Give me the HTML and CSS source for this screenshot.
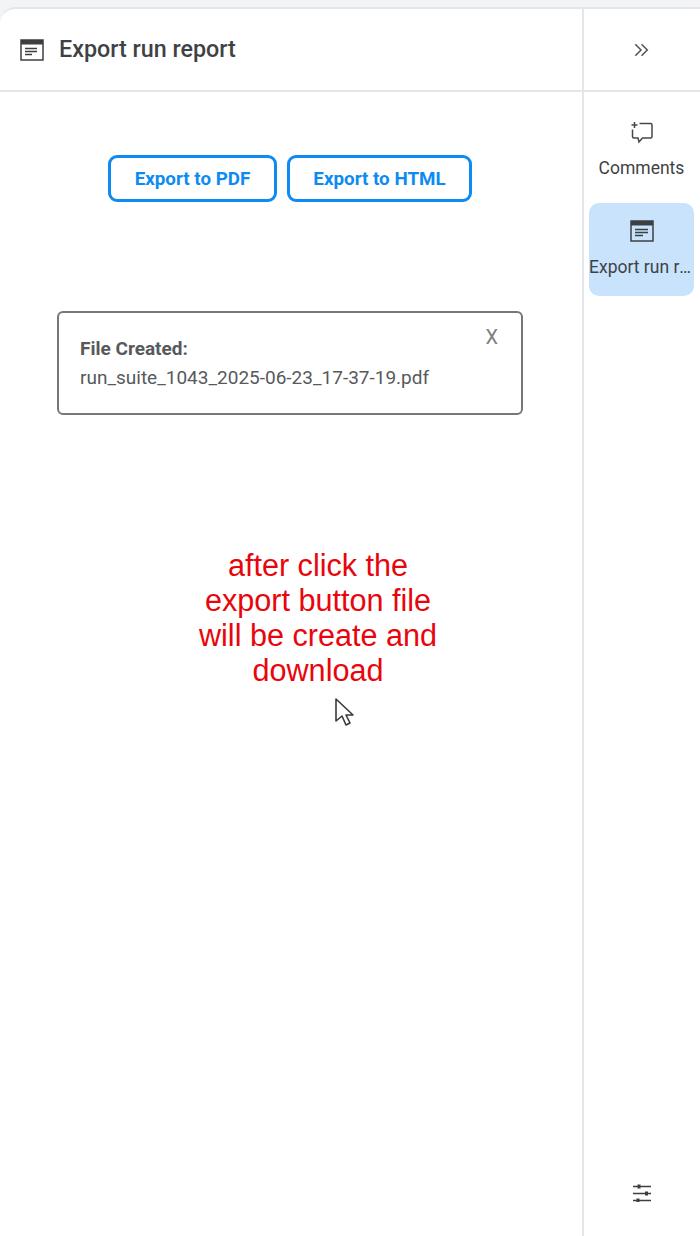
FILE: index.html
```html
<!DOCTYPE html>
<html lang="en">
<head>
    <meta charset="UTF-8">
    <meta name="viewport" content="width=device-width, initial-scale=1.0">
    <title>Export run report</title>
    <link rel="stylesheet" href="styles.css">
</head>
<body>
    <div class="panel">
        <div class="main">
            <div class="main_header">
                <svg class="report_icon" viewBox="0 0 24 24">
                    <rect x="1" y="2" width="22" height="20" fill="none" stroke="#3c3f42" stroke-width="1.5"/>
                    <rect x="1" y="2" width="22" height="4.5" fill="#3c3f42"/>
                    <path d="M5 10.5h12M5 13.500h12M5 16.500h7" stroke="#3c3f42" stroke-width="1.3"/>
                </svg>
                <span class="main_title">Export run report</span>
            </div>
            <div class="main_body">
                <div class="actions">
                    <button class="btn btn_pdf">Export to PDF</button>
                    <button class="btn btn_html">Export to HTML</button>
                </div>
                <div class="notice">
                    <div class="notice_title">File Created:</div>
                    <div class="notice_file">run_suite_1043_2025-06-23_17-37-19.pdf</div>
                    <span class="notice_close">X</span>
                </div>
            </div>
        </div>

        <div class="side">
            <div class="side_header">
                <svg class="collapse_icon" viewBox="0 0 14 14">
                    <path d="M2 2l5 5-5 5M7.500 2l5 5-5 5" fill="none" stroke="#55585b" stroke-width="1.4"/>
                </svg>
            </div>
            <div class="side_items">
                <div class="side_item">
                    <svg class="side_icon" viewBox="0 0 24 24">
                        <path d="M9.500 2.500h11a1.500 1.500 0 0 1 1.500 1.500v11.500a1.500 1.500 0 0 1-1.500 1.500h-8l-3.500 4-1-4h-4a1.500 1.500 0 0 1-1.500-1.500v-7" fill="none" stroke="#45484b" stroke-width="1.500"/>
                        <path d="M4.500 1v6M1.500 4h6" stroke="#45484b" stroke-width="1.500"/>
                    </svg>
                    <span class="side_label">Comments</span>
                </div>
                <div class="side_item active">
                    <svg class="side_icon" viewBox="0 0 24 24">
                        <rect x="1" y="2" width="22" height="20" fill="none" stroke="#3c3f42" stroke-width="1.500"/>
                        <rect x="1" y="2" width="22" height="4.500" fill="#3c3f42"/>
                        <path d="M5 10.500h13M5 13.500h13M5 16.500h8" stroke="#3c3f42" stroke-width="1.300"/>
                    </svg>
                    <span class="side_label">Export run report</span>
                </div>
            </div>
            <div class="side_footer">
                <svg class="settings_icon" viewBox="0 0 18 18">
                    <path d="M0 2.500h18M0 9.500h18M0 16.500h18" stroke="#3c3f42" stroke-width="1.500"/>
                    <path d="M4.500 0.500h3v4h-3zM12 7.500h3v4h-3zM3.500 14.500h3v4h-3z" fill="#3c3f42"/>
                </svg>
            </div>
        </div>
    </div>

    <div class="annotation">after click the export button file will be create and download</div>
    <svg class="cursor" viewBox="0 0 20 30">
        <path d="M2 2v22l6-5 4 9 4-2-4-8h7z" fill="#fff" stroke="#3a3a3a" stroke-width="1.600" stroke-linejoin="round"/>
    </svg>
</body>
</html>
```

FILE: styles.css
```css
*{
    margin: 0;
    padding: 0;
    box-sizing: border-box;
}

html,body{
    height: 100%;
}

body{
    background-color: #f3f4f6;
    font-family: Roboto, "Liberation Sans", sans-serif;
    padding-top: 7px;
    overflow: hidden;
    position: relative;
}

.panel{
    height: 1229px;
    display: flex;
    background-color: #fff;
    border-top: 2px solid #e5e6e8;
    border-top-left-radius: 16px;
}

.main{
    flex: 1;
    min-width: 0;
}

.main_header{
    height: 83px;
    display: flex;
    align-items: center;
    gap: 15px;
    padding-left: 20px;
    border-bottom: 2px solid #e5e6e8;
}

.report_icon{
    width: 24px;
    height: 24px;
}

.main_title{
    font-size: 23.300px;
    font-weight: 500;
    color: #3f4245;
    padding-bottom: 2px;
}

.main_body{
    display: flex;
    flex-direction: column;
    align-items: center;
    padding-right: 2px;
}

.actions{
    display: flex;
    gap: 10px;
    margin-top: 63px;
}

.btn{
    height: 47px;
    background-color: #fff;
    border: 3px solid #0d8bf2;
    border-radius: 9px;
    color: #0d8bf2;
    font-family: inherit;
    font-size: 18.800px;
    font-weight: 700;
}

.btn_pdf{
    width: 169px;
}

.btn_html{
    width: 185px;
}

.notice{
    width: 466px;
    height: 104px;
    margin-top: 109px;
    padding: 23px 21px;
    position: relative;
    border: 2px solid #777;
    border-radius: 6px;
    font-size: 19px;
    color: #57595c;
}

.notice_title{
    font-weight: 700;
    line-height: 26px;
}

.notice_file{
    line-height: 31px;
}

.notice_close{
    position: absolute;
    top: 12px;
    right: 23px;
    font-size: 20px;
    color: #808080;
}

.side{
    width: 118px;
    display: flex;
    flex-direction: column;
    border-left: 2px solid #e5e6e8;
}

.side_header{
    height: 83px;
    padding-right: 2px;
    display: flex;
    align-items: center;
    justify-content: center;
    border-bottom: 2px solid #e5e6e8;
}

.collapse_icon{
    width: 16px;
    height: 16px;
}

.side_items{
    flex: 1;
    padding: 13px 6px 0 5px;
    display: flex;
    flex-direction: column;
    gap: 14px;
}

.side_item{
    height: 93px;
    padding-top: 16px;
    display: flex;
    flex-direction: column;
    align-items: center;
    gap: 14px;
    border-radius: 10px;
}

.side_item:first-child{
    height: 84px;
    padding-top: 16px;
    gap: 13px;
}

.side_item.active{
    background-color: #c9e3fd;
}

.side_icon{
    width: 24px;
    height: 24px;
}

.side_label{
    width: 100%;
    font-size: 17.500px;
    color: #3f4245;
    text-align: center;
    white-space: nowrap;
    overflow: hidden;
    text-overflow: ellipsis;
}

.side_footer{
    height: 55px;
    padding-top: 3px;
    padding-right: 1px;
    display: flex;
    align-items: flex-start;
    justify-content: center;
}

.settings_icon{
    width: 18px;
    height: 18px;
}

.annotation{
    position: absolute;
    left: 190px;
    top: 548px;
    width: 256px;
    font-family: "Liberation Sans", Arial, sans-serif;
    font-size: 30.600px;
    line-height: 35px;
    color: #e8060c;
    text-align: center;
}

.cursor{
    position: absolute;
    left: 334px;
    top: 697px;
    width: 20px;
    height: 30px;
}
```
